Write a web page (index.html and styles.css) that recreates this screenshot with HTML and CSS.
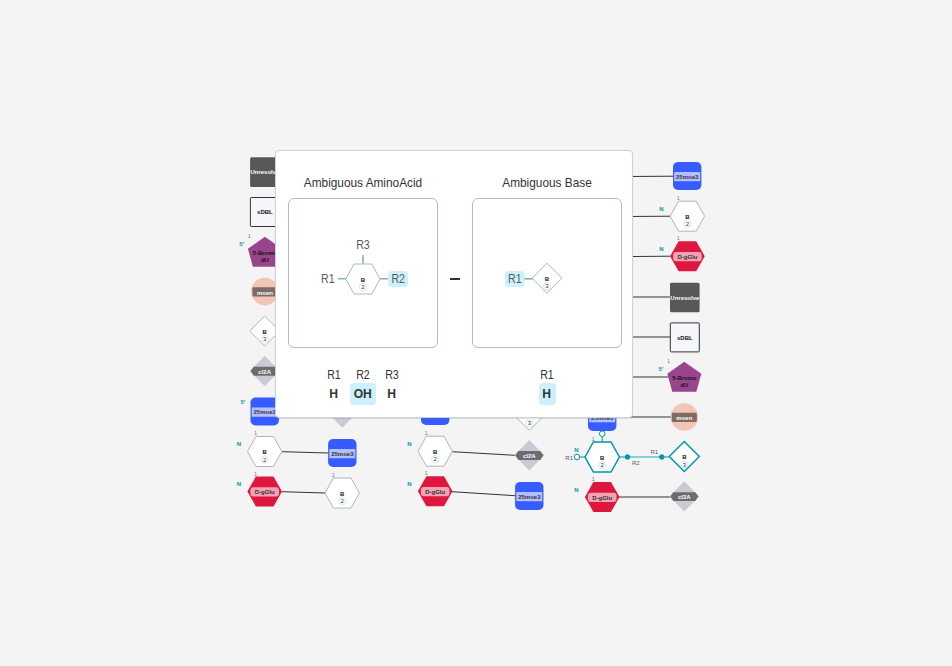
FILE: index.html
```
<!DOCTYPE html>
<html lang="en">
<head>
<meta charset="utf-8">
<title>Macromolecule editor</title>
<link rel="stylesheet" href="styles.css">
</head>
<body>
<svg class="canvas" width="952" height="666" viewBox="0 0 952 666">
  <defs>
    <g id="unresolved"><rect class="sq-dark" x="-14.8" y="-14.8" width="29.6" height="29.6" rx="1.5"/><text class="lbl light" y="2.2">Unresolve</text></g>
    <g id="sdbl"><rect class="sq-light" x="-14.5" y="-14.5" width="29" height="29" rx="1"/><text class="lbl" y="2.3">sDBL</text></g>
    <g id="bromo"><path class="purple" d="M0-15.2 17-3.3 12 14.7H-12L-17-3.3Z"/><text class="lbl" y="3" textLength="24.3" lengthAdjust="spacingAndGlyphs">5-Bromo</text><text class="lbl" y="10">dU</text></g>
    <g id="moen"><circle class="peach" r="13.8"/><rect class="tag-brown" x="-12.5" y="-4.3" width="25" height="9.3" rx="1"/><text class="lbl light" y="3">moen</text></g>
    <g id="count2"><circle class="ring" cy="8" r="3.6"/><text class="lbl" y="2.9">B</text><text class="num" y="10.2">2</text></g>
    <g id="count3"><circle class="ring" cy="8" r="3.6"/><text class="lbl" y="2.5">B</text><text class="num" y="10">3</text></g>
    <g id="hexb"><path class="shape" d="M-17.2 0-8.8-15H8.8L17.2 0 8.8 15H-8.8Z"/><use href="#count2"/></g>
    <g id="diab"><path class="shape" d="M0-15 15 0 0 15-15 0Z"/><use href="#count3"/></g>
    <g id="cl2a"><path class="lilac" d="M0-15.2 15 0 0 15.2-15 0Z"/><path class="tag-gray" d="M-14 0-11-4.2H11L14 0 11 4.7H-11Z"/><text class="lbl light" y="2.8">cl2A</text></g>
    <g id="moe"><rect class="blue" x="-14.2" y="-14" width="28.4" height="28" rx="5"/><rect class="tag-blue" x="-13" y="-4" width="26" height="9.2" rx=".5"/><text class="lbl" y="2.9">25moe3</text></g>
    <g id="dglu"><path class="red" d="M-17.3 0-8.8-15H8.8L17.3 0 8.8 15H-8.8Z"/><rect class="tag-pink" x="-14.3" y="-4.3" width="28.6" height="9.3" rx="3"/><text class="lbl" y="2.8">D-gGlu</text></g>
  </defs>

  <path class="bond" d="M282 451.7 328 453M282 491.7 325 493M452 451.7 515 455.3M452 491.7 515 495.7M600 176.7 673 176.2M600 216.7 670 216.2M600 256.8 670 256.2"/>
  <path class="bond" d="M600 297H670M600 337H670M600 377H668M616 417H671M619 497H670"/>

  <use href="#unresolved" x="264.9" y="172.1"/>
  <use href="#sdbl" x="264.9" y="212"/>
  <use href="#bromo" x="264.9" y="252"/>
  <use href="#moen" x="264.9" y="291.6"/>
  <use href="#diab" x="264.7" y="331"/>
  <use href="#cl2a" x="264.7" y="371"/>
  <use href="#moe" x="264.7" y="411.5"/>
  <use href="#hexb" x="264.7" y="451.5"/>
  <use href="#dglu" x="264.7" y="491.6"/>

  <use href="#cl2a" x="342.3" y="412.6"/>
  <use href="#moe" x="342.3" y="453"/>
  <use href="#hexb" x="342.2" y="493"/>

  <use href="#moe" x="435.2" y="411"/>
  <use href="#hexb" x="435.2" y="451.2"/>
  <use href="#dglu" x="435.2" y="491.2"/>

  <use href="#diab" x="529.3" y="415.4"/>
  <use href="#cl2a" x="529.3" y="455.3"/>
  <use href="#moe" x="529.3" y="496"/>

  <use href="#moe" x="602.2" y="417"/>
  <path class="port-line" d="M580 457H586M602.2 437V442M619 457H627M662 457H669"/>
  <path class="link" d="M627 457H662"/>
  <g class="selected">
    <use href="#hexb" x="602.2" y="457"/>
    <use href="#diab" x="684.3" y="456.5"/>
  </g>
  <circle class="port" cx="577" cy="457" r="2.8"/>
  <circle class="port" cx="602.2" cy="433.8" r="2.8"/>
  <circle class="port filled" cx="627.5" cy="457" r="2.3"/>
  <circle class="port filled" cx="661.8" cy="457" r="2.3"/>
  <use href="#dglu" x="602.2" y="497"/>

  <use href="#moe" x="687.2" y="176"/>
  <use href="#hexb" x="687.4" y="216.2"/>
  <use href="#dglu" x="687.4" y="256.2"/>
  <use href="#unresolved" x="684.8" y="297.5"/>
  <use href="#sdbl" x="684.8" y="337.4"/>
  <use href="#bromo" x="684.3" y="377"/>
  <use href="#moen" x="684.3" y="417"/>
  <use href="#cl2a" x="684.3" y="496.4"/>

  <g class="idx">
    <text x="249.2" y="238.3">1</text><text x="255.5" y="435">1</text><text x="255.5" y="475.5">1</text>
    <text x="333.2" y="477.3">2</text><text x="426.2" y="434.8">1</text><text x="426.2" y="475">1</text>
    <text x="593.2" y="441">1</text><text x="593.2" y="480.7">1</text>
    <text x="678.3" y="200">1</text><text x="678.3" y="240">1</text><text x="668.5" y="363">1</text>
    <text x="335" y="153.5">1</text>
  </g>
  <g class="term">
    <text x="241.7" y="246.3">5'</text><text x="243" y="404.2">5'</text><text x="239" y="446">N</text><text x="239" y="486">N</text>
    <text x="409.3" y="446">N</text><text x="409.3" y="486">N</text>
    <text x="576.5" y="452">N</text><text x="576.5" y="492">N</text>
    <text x="661.4" y="211">N</text><text x="661.4" y="251">N</text><text x="661" y="371.2">5'</text>
  </g>
  <g class="rlabel"><text x="569.2" y="460">R1</text><text x="635.8" y="465">R2</text><text x="654.3" y="454">R1</text></g>
</svg>

<section class="popup">
  <div class="monomer">
    <h2>Ambiguous AminoAcid</h2>
    <div class="frame">
      <svg width="148" height="148" viewBox="289 199 148 148">
        <path class="stub" d="M338 278.8H346M363 255V264M380 278.8H388.5"/>
        <use href="#hexb" x="362.9" y="279"/>
        <rect class="chip" x="388.2" y="271" width="19.8" height="16" rx="3.5"/>
        <g class="att"><text x="327.8" y="283">R1</text><text x="363" y="248.6">R3</text><text x="398.2" y="283">R2</text></g>
      </svg>
    </div>
    <dl class="groups">
      <div><dt>R1</dt><dd><b>H</b></dd></div>
      <div><dt>R2</dt><dd class="on wide"><b>OH</b></dd></div>
      <div><dt>R3</dt><dd><b>H</b></dd></div>
    </dl>
  </div>
  <span class="dash"></span>
  <div class="monomer">
    <h2>Ambiguous Base</h2>
    <div class="frame">
      <svg width="148" height="148" viewBox="473 199 148 148">
        <path class="stub" d="M524 278.8H533"/>
        <use href="#diab" x="547" y="278.2"/>
        <rect class="chip" x="505" y="271" width="19.6" height="16" rx="3.5"/>
        <g class="att"><text x="514.8" y="283">R1</text></g>
      </svg>
    </div>
    <dl class="groups">
      <div><dt>R1</dt><dd class="on"><b>H</b></dd></div>
    </dl>
  </div>
</section>
</body>
</html>
```
FILE: styles.css
```
* { box-sizing: border-box; }
body { margin: 0; width: 952px; height: 666px; overflow: hidden; position: relative; background: #f4f4f4; font-family: "Liberation Sans", Arial, sans-serif; color: #333; }
svg { display: block; }
svg text { text-anchor: middle; }

.lbl { font-size: 6px; font-weight: 700; fill: #111; }
.lbl.light { fill: #fff; }
.tag-blue + .lbl, .tag-pink + .lbl { fill: #333; }
.num { font-size: 6px; fill: #333; }
.ring { fill: #fff; stroke: #cdecec; stroke-width: 1; }
.shape { fill: #fff; stroke: var(--edge, #b4b4b4); stroke-width: var(--edge-width, 1); }
.selected { --edge: #0097a8; --edge-width: 1.5; }
.sq-dark { fill: #585858; }
.sq-light { fill: #f5f6fa; stroke: #333; stroke-width: 1; }
.purple { fill: #99458d; }
.peach { fill: #f3c5b6; }
.lilac { fill: #cac9d5; }
.blue { fill: #365cff; }
.red { fill: #de173f; }
.tag-brown { fill: #806a64; }
.tag-gray { fill: #6c6c6f; }
.tag-blue { fill: #b2c0ff; }
.tag-pink { fill: #f2a2b3; }
.bond { fill: none; stroke: #333; stroke-width: 1; }
.port-line { fill: none; stroke: #0097a8; stroke-width: 1; }
.link { stroke: #62c6ce; stroke-width: 1.6; }
.port { fill: #fff; stroke: #0097a8; stroke-width: 1; }
.filled { fill: #0097a8; }
.idx { font-size: 5.5px; fill: #7c7c7f; }
.term { font-size: 6px; font-weight: 700; fill: #0097a8; }
.rlabel { font-size: 6px; fill: #585858; }

.popup { position: absolute; left: 275px; top: 150px; width: 358px; height: 268px; padding: 0 10px 0 12px; display: flex; justify-content: space-between; background: #fff; border: 1px solid #cad3dd; border-radius: 4px; box-shadow: 0 1px 1px rgba(103, 104, 132, .2); }
.monomer { width: 150px; }
.monomer h2 { margin: 25px 0 8px; height: 14px; font-size: 13px; line-height: 14px; font-weight: 400; text-align: center; white-space: nowrap; transform: scaleX(.91); }
.frame { width: 150px; height: 150px; border: 1px solid #b4b9d6; border-radius: 6px; }
.stub { stroke: #7fb5bb; stroke-width: 1.6; }
.chip { fill: #cdf1fc; }
.att { font-size: 12.5px; fill: #585858; }
.att text { transform-box: fill-box; transform-origin: center; transform: scaleX(.85); }
.groups { margin: 20px 0 0; display: flex; justify-content: center; gap: 3px; text-align: center; }
.groups div { width: 26px; }
.groups dt { font-size: 12.5px; line-height: 14px; transform: scaleX(.85); }
.groups dd { margin: 1px auto 0; width: 17px; height: 22px; line-height: 22px; border-radius: 4px; font-size: 13px; }
.groups dd b { display: inline-block; transform: scaleX(.93); }
.groups dd.on { background: #cdf1fc; }
.groups dd.wide { width: 26px; }
.dash { align-self: flex-start; margin-top: 127px; width: 10px; height: 2px; background: #333; }
```
